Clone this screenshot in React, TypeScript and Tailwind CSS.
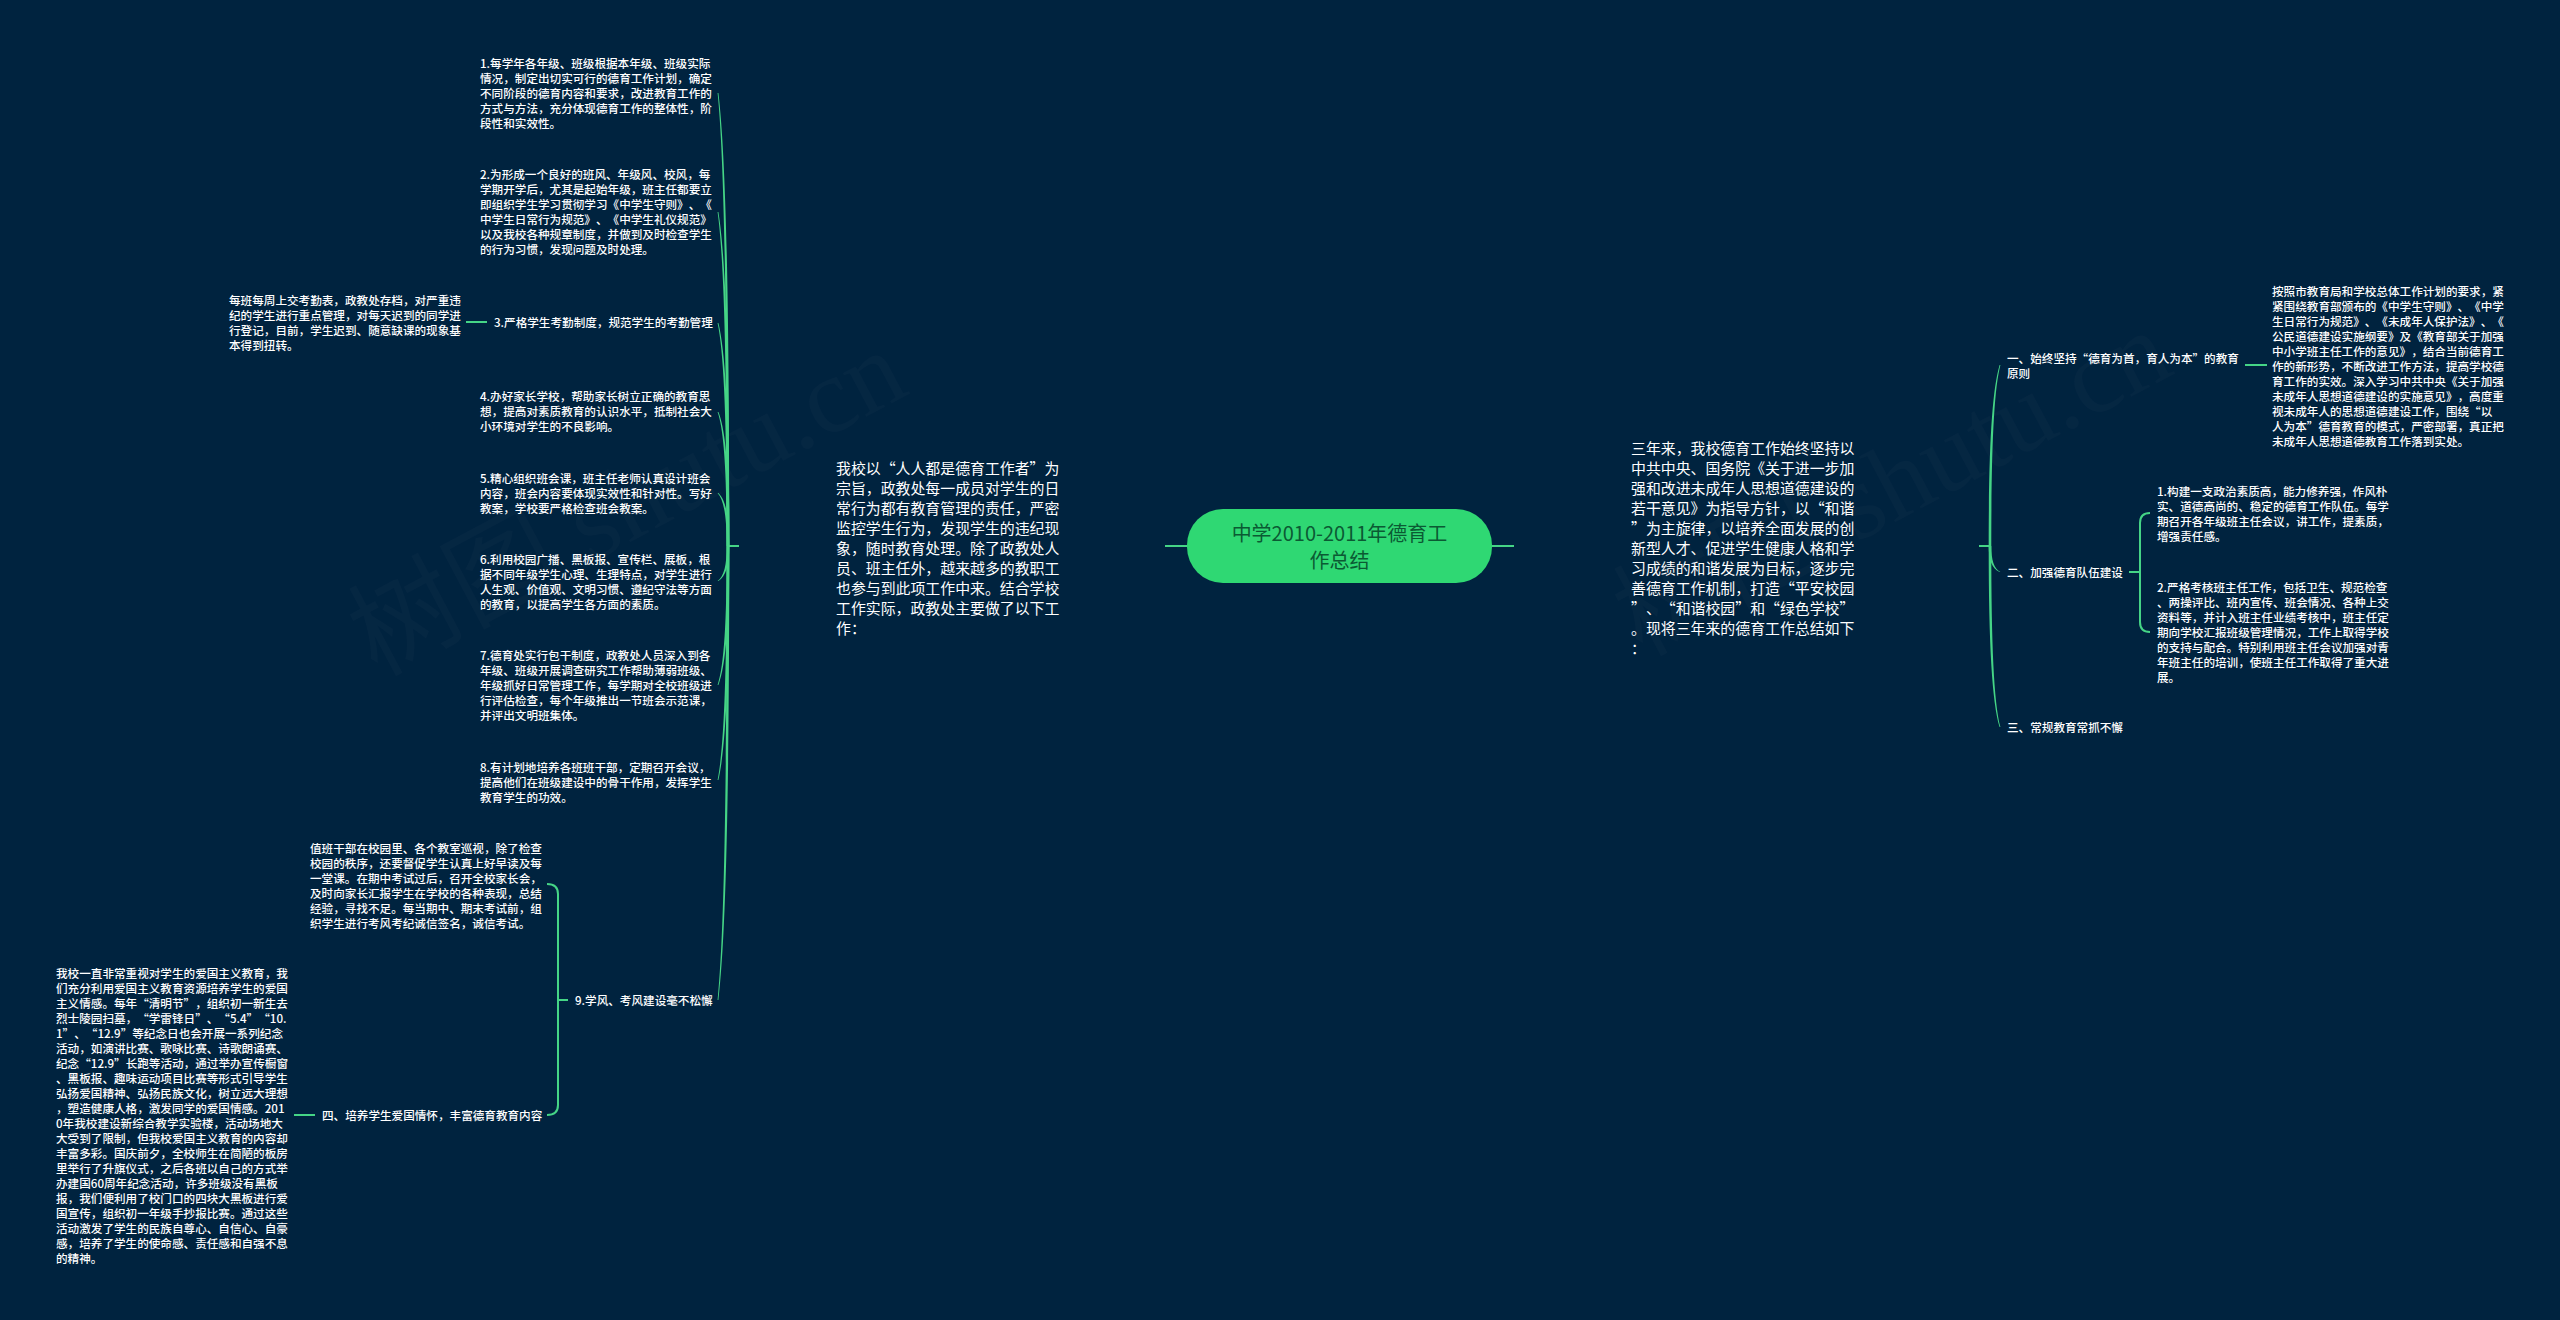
type MapNode = {
  pos: string;
  lines: string[];
};

const smallNodes: MapNode[] = [
  {
    pos: "left-[480px] top-[56px]",
    lines: [
      "1.每学年各年级、班级根据本年级、班级实际",
      "情况，制定出切实可行的德育工作计划，确定",
      "不同阶段的德育内容和要求，改进教育工作的",
      "方式与方法，充分体现德育工作的整体性，阶",
      "段性和实效性。",
    ],
  },
  {
    pos: "left-[480px] top-[167px]",
    lines: [
      "2.为形成一个良好的班风、年级风、校风，每",
      "学期开学后，尤其是起始年级，班主任都要立",
      "即组织学生学习贯彻学习《中学生守则》、《",
      "中学生日常行为规范》、《中学生礼仪规范》",
      "以及我校各种规章制度，并做到及时检查学生",
      "的行为习惯，发现问题及时处理。",
    ],
  },
  {
    pos: "left-[494px] top-[315px]",
    lines: ["3.严格学生考勤制度，规范学生的考勤管理"],
  },
  {
    pos: "left-[229px] top-[293px]",
    lines: [
      "每班每周上交考勤表，政教处存档，对严重违",
      "纪的学生进行重点管理，对每天迟到的同学进",
      "行登记，目前，学生迟到、随意缺课的现象基",
      "本得到扭转。",
    ],
  },
  {
    pos: "left-[480px] top-[389px]",
    lines: [
      "4.办好家长学校，帮助家长树立正确的教育思",
      "想，提高对素质教育的认识水平，抵制社会大",
      "小环境对学生的不良影响。",
    ],
  },
  {
    pos: "left-[480px] top-[471px]",
    lines: [
      "5.精心组织班会课，班主任老师认真设计班会",
      "内容，班会内容要体现实效性和针对性。写好",
      "教案，学校要严格检查班会教案。",
    ],
  },
  {
    pos: "left-[480px] top-[552px]",
    lines: [
      "6.利用校园广播、黑板报、宣传栏、展板，根",
      "据不同年级学生心理、生理特点，对学生进行",
      "人生观、价值观、文明习惯、遵纪守法等方面",
      "的教育，以提高学生各方面的素质。",
    ],
  },
  {
    pos: "left-[480px] top-[648px]",
    lines: [
      "7.德育处实行包干制度，政教处人员深入到各",
      "年级、班级开展调查研究工作帮助薄弱班级、",
      "年级抓好日常管理工作，每学期对全校班级进",
      "行评估检查，每个年级推出一节班会示范课，",
      "并评出文明班集体。",
    ],
  },
  {
    pos: "left-[480px] top-[760px]",
    lines: [
      "8.有计划地培养各班班干部，定期召开会议，",
      "提高他们在班级建设中的骨干作用，发挥学生",
      "教育学生的功效。",
    ],
  },
  {
    pos: "left-[575px] top-[993px]",
    lines: ["9.学风、考风建设毫不松懈"],
  },
  {
    pos: "left-[310px] top-[841px]",
    lines: [
      "值班干部在校园里、各个教室巡视，除了检查",
      "校园的秩序，还要督促学生认真上好早读及每",
      "一堂课。在期中考试过后，召开全校家长会，",
      "及时向家长汇报学生在学校的各种表现，总结",
      "经验，寻找不足。每当期中、期末考试前，组",
      "织学生进行考风考纪诚信签名，诚信考试。",
    ],
  },
  {
    pos: "left-[322px] top-[1108px]",
    lines: ["四、培养学生爱国情怀，丰富德育教育内容"],
  },
  {
    pos: "left-[56px] top-[966px]",
    lines: [
      "我校一直非常重视对学生的爱国主义教育，我",
      "们充分利用爱国主义教育资源培养学生的爱国",
      "主义情感。每年“清明节”，组织初一新生去",
      "烈士陵园扫墓，“学雷锋日”、“5.4”“10.",
      "1”、“12.9”等纪念日也会开展一系列纪念",
      "活动，如演讲比赛、歌咏比赛、诗歌朗诵赛、",
      "纪念“12.9”长跑等活动，通过举办宣传橱窗",
      "、黑板报、趣味运动项目比赛等形式引导学生",
      "弘扬爱国精神、弘扬民族文化，树立远大理想",
      "，塑造健康人格，激发同学的爱国情感。201",
      "0年我校建设新综合教学实验楼，活动场地大",
      "大受到了限制，但我校爱国主义教育的内容却",
      "丰富多彩。国庆前夕，全校师生在简陋的板房",
      "里举行了升旗仪式，之后各班以自己的方式举",
      "办建国60周年纪念活动，许多班级没有黑板",
      "报，我们便利用了校门口的四块大黑板进行爱",
      "国宣传，组织初一年级手抄报比赛。通过这些",
      "活动激发了学生的民族自尊心、自信心、自豪",
      "感，培养了学生的使命感、责任感和自强不息",
      "的精神。",
    ],
  },
  {
    pos: "left-[2007px] top-[351px]",
    lines: ["一、始终坚持“德育为首，育人为本”的教育", "原则"],
  },
  {
    pos: "left-[2272px] top-[284px]",
    lines: [
      "按照市教育局和学校总体工作计划的要求，紧",
      "紧围绕教育部颁布的《中学生守则》、《中学",
      "生日常行为规范》、《未成年人保护法》、《",
      "公民道德建设实施纲要》及《教育部关于加强",
      "中小学班主任工作的意见》，结合当前德育工",
      "作的新形势，不断改进工作方法，提高学校德",
      "育工作的实效。深入学习中共中央《关于加强",
      "未成年人思想道德建设的实施意见》，高度重",
      "视未成年人的思想道德建设工作，围绕“以",
      "人为本”德育教育的模式，严密部署，真正把",
      "未成年人思想道德教育工作落到实处。",
    ],
  },
  {
    pos: "left-[2007px] top-[565px]",
    lines: ["二、加强德育队伍建设"],
  },
  {
    pos: "left-[2157px] top-[484px]",
    lines: [
      "1.构建一支政治素质高，能力修养强，作风朴",
      "实、道德高尚的、稳定的德育工作队伍。每学",
      "期召开各年级班主任会议，讲工作，提素质，",
      "增强责任感。",
    ],
  },
  {
    pos: "left-[2157px] top-[580px]",
    lines: [
      "2.严格考核班主任工作，包括卫生、规范检查",
      "、两操评比、班内宣传、班会情况、各种上交",
      "资料等，并计入班主任业绩考核中，班主任定",
      "期向学校汇报班级管理情况，工作上取得学校",
      "的支持与配合。特别利用班主任会议加强对青",
      "年班主任的培训，使班主任工作取得了重大进",
      "展。",
    ],
  },
  {
    pos: "left-[2007px] top-[720px]",
    lines: ["三、常规教育常抓不懈"],
  },
];

const bigNodes: MapNode[] = [
  {
    pos: "left-[836px] top-[458px]",
    lines: [
      "我校以“人人都是德育工作者”为",
      "宗旨，政教处每一成员对学生的日",
      "常行为都有教育管理的责任，严密",
      "监控学生行为，发现学生的违纪现",
      "象，随时教育处理。除了政教处人",
      "员、班主任外，越来越多的教职工",
      "也参与到此项工作中来。结合学校",
      "工作实际，政教处主要做了以下工",
      "作：",
    ],
  },
  {
    pos: "left-[1631px] top-[438px]",
    lines: [
      "三年来，我校德育工作始终坚持以",
      "中共中央、国务院《关于进一步加",
      "强和改进未成年人思想道德建设的",
      "若干意见》为指导方针，以“和谐",
      "”为主旋律，以培养全面发展的创",
      "新型人才、促进学生健康人格和学",
      "习成绩的和谐发展为目标，逐步完",
      "善德育工作机制，打造“平安校园",
      "”、“和谐校园”和“绿色学校”",
      "。现将三年来的德育工作总结如下",
      "：",
    ],
  },
];

// thick at the root, thin at the tip
const branch = (x0: number, y0: number, x1: number, y1: number) => {
  const dy = y1 - y0;
  const cx = x0 + (x1 - x0) * 0.3;
  const c1y = y0 + dy * 0.55;
  const c2y = y1 - dy * 0.14;
  return (
    `M${x0 - 1.3} ${y0} C${x0 - 1.3} ${c1y} ${cx - 0.9} ${c2y} ${x1 - 0.4} ${y1} ` +
    `L${x1 + 0.4} ${y1} C${cx + 0.9} ${c2y} ${x0 + 1.3} ${c1y} ${x0 + 1.3} ${y0} Z`
  );
};

const leftTips = [93, 212, 323, 412, 493, 581, 685, 780, 1000];
const rightTips = [365, 572, 727];

const straightLines = [
  "M1165 546H1187",
  "M1492 546H1514",
  "M728 546H739",
  "M1979 546H1990",
  "M466 322H487",
  "M294 1115H315",
  "M2245 365H2267",
  "M2129 572H2140",
  "M558 1000H568",
];

const brackets = [
  "M547 884C554 884 558 887 558 894V1105C558 1112 554 1115 547 1115",
  "M2150 513C2143 513 2140 516 2140 523V622C2140 629 2143 632 2150 632",
];

const Connectors = () => (
  <svg className="absolute inset-0" width={2560} height={1320} viewBox="0 0 2560 1320" fill="none">
    {leftTips.map((y) => (
      <path key={y} d={branch(728, 546, 718, y)} fill="#45d586" />
    ))}
    {rightTips.map((y) => (
      <path key={y} d={branch(1990, 546, 2000, y)} fill="#45d586" />
    ))}
    {straightLines.map((d) => (
      <path key={d} d={d} stroke="#45d586" strokeWidth={2} />
    ))}
    {brackets.map((d) => (
      <path key={d} d={d} stroke="#45d586" strokeWidth={2} />
    ))}
  </svg>
);

const Watermark = ({ pos }: { pos: string }) => (
  <div
    className={`absolute ${pos} -rotate-[28deg] origin-bottom-left whitespace-nowrap text-[108px] leading-none text-white/[0.02] [font-family:'Liberation_Serif','Noto_Sans_CJK_SC',serif]`}
  >
    树图 shutu.cn
  </div>
);

export default function App() {
  return (
    <div className="relative w-[2560px] h-[1320px] overflow-hidden bg-[#00233f] [font-family:'Noto_Sans_CJK_SC',sans-serif] [text-spacing-trim:space-all]">
      <Watermark pos="left-[385px] top-[585px]" />
      <Watermark pos="left-[1650px] top-[565px]" />
      <Connectors />

      {smallNodes.map((node) => (
        <div
          key={node.lines[0]}
          className={`absolute ${node.pos} whitespace-nowrap text-[11.6px] leading-[15px] font-medium text-white`}
        >
          {node.lines.map((line) => (
            <div key={line}>{line}</div>
          ))}
        </div>
      ))}

      {bigNodes.map((node) => (
        <div
          key={node.lines[0]}
          className={`absolute ${node.pos} whitespace-nowrap text-[14.9px] leading-[20px] text-white`}
        >
          {node.lines.map((line) => (
            <div key={line}>{line}</div>
          ))}
        </div>
      ))}

      {/* root topic */}
      <div className="absolute left-[1187px] top-[509px] flex h-[74px] w-[305px] flex-col items-center justify-center rounded-[36px] bg-[#2fd873] text-[20px] leading-[27px] text-[#0b5a33]">
        <div>中学2010-2011年德育工</div>
        <div>作总结</div>
      </div>
    </div>
  );
}
